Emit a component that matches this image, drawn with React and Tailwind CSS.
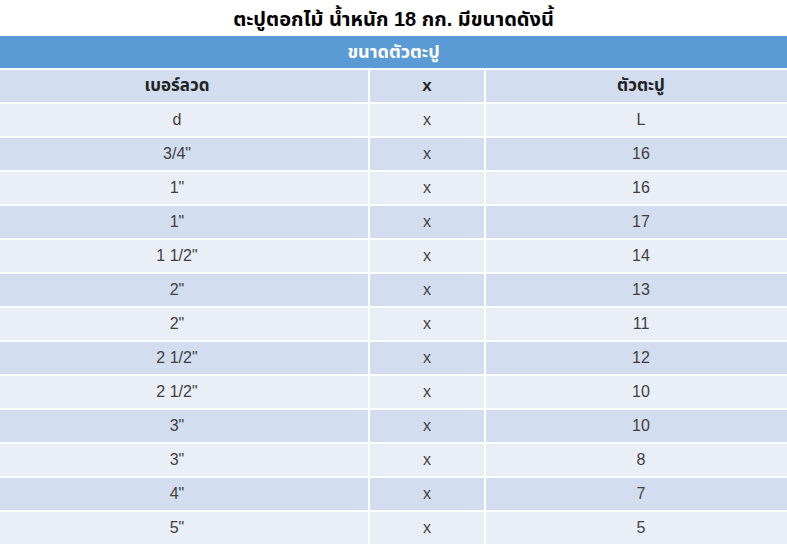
const rows = [
    ["d", "x", "L"],
    ['3/4"', "x", "16"],
    ['1"', "x", "16"],
    ['1"', "x", "17"],
    ['1 1/2"', "x", "14"],
    ['2"', "x", "13"],
    ['2"', "x", "11"],
    ['2 1/2"', "x", "12"],
    ['2 1/2"', "x", "10"],
    ['3"', "x", "10"],
    ['3"', "x", "8"],
    ['4"', "x", "7"],
    ['5"', "x", "5"],
];

const font = { fontFamily: '"Liberation Sans", "Noto Sans Thai", "Noto Sans", sans-serif' };

// the sheet's table is a bit wider than the window, so the outer columns run past both edges
const Row = ({ cells, bg, bold }) => (
    <div
        className={`flex gap-[2px] h-[32px] ml-[-14px] w-[810px] ${
            bold ? "font-bold text-[#222] text-[17px]" : "text-[#404040]"
        }`}>
        {cells.map((c, i) => (
            <div
                key={i}
                className={`flex items-center justify-center ${bg} ${
                    i === 0 ? "w-[382px]" : i === 1 ? "w-[114px]" : "flex-1"
                }`}>
                {c}
            </div>
        ))}
    </div>
);

export default function App() {
    return (
        <div className="w-[787px] h-[548px] bg-white overflow-hidden" style={font}>
            <h1 className="h-[36px] flex items-center justify-center pt-[2px] text-[20px] font-bold text-black">
                ตะปูตอกไม้ น้ำหนัก 18 กก. มีขนาดดังนี้
            </h1>
            <div className="flex flex-col gap-[2px] text-[16px]">
                <div className="h-[32px] bg-[#5b9bd5] flex items-center justify-center text-white font-bold text-[18px]">
                    ขนาดตัวตะปู
                </div>
                <Row cells={["เบอร์ลวด", "x", "ตัวตะปู"]} bg="bg-[#d2deef]" bold />
                {rows.map((r, i) => (
                    <Row
                        key={i}
                        cells={r}
                        bg={i % 2 === 0 ? "bg-[#eaeff7]" : "bg-[#d2deef]"}
                    />
                ))}
            </div>
        </div>
    );
}
